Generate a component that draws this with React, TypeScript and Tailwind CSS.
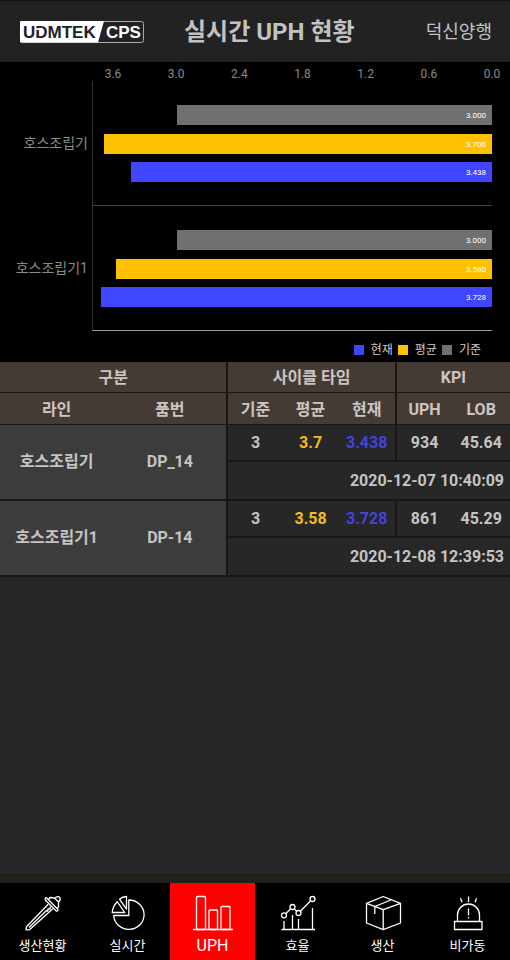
import type { ReactNode } from "react";

const font = "font-[Roboto,'Noto_Sans_CJK_KR',sans-serif]";

const AXIS_MAX = 3.8;
const ticks = ["3.6", "3.0", "2.4", "1.8", "1.2", "0.6", "0.0"];

type Line = {
  name: string;
  part: string;
  base: number;
  average: number;
  current: number;
  uph: number;
  lob: number;
  time: string;
};

const lines: Line[] = [
  { name: "호스조립기", part: "DP_14", base: 3, average: 3.7, current: 3.438, uph: 934, lob: 45.64, time: "2020-12-07 10:40:09" },
  { name: "호스조립기1", part: "DP-14", base: 3, average: 3.58, current: 3.728, uph: 861, lob: 45.29, time: "2020-12-08 12:39:53" },
];

function Logo() {
  return (
    <svg viewBox="0 0 124 22" className="h-[22px] w-[124px] shrink-0" role="img" aria-label="UDMTEK CPS">
      <rect x="0.5" y="0.5" width="123" height="21" rx="2" fill="#222" stroke="#aaa" />
      <path d="M1 0H84L78 21.5H1Q0 21.5 0 20.5V1Q0 0 1 0Z" fill="#fff" />
      <text x="3" y="17" fontSize="17" fontWeight="700" fill="#222" fontFamily="Liberation Sans, sans-serif">UDMTEK</text>
      <text x="86" y="17" fontSize="17" fontWeight="700" fill="#fff" fontFamily="Liberation Sans, sans-serif">CPS</text>
      <path d="M15.500 7.200H20.500V9H15.500Z" fill="#fff" />
    </svg>
  );
}

function Bar({ value, tone }: { value: number; tone: string }) {
  return (
    <div
      className={`flex h-5 items-center justify-end pt-0.5 pr-[6px] text-[8px] leading-none text-white ${tone}`}
      style={{ width: `${(value / AXIS_MAX) * 100}%` }}
    >
      {value.toFixed(3)}
    </div>
  );
}

function Chart() {
  return (
    <section className="bg-black pr-[18px] pb-[4px]">
      <div className="ml-[92px]">
        <div className="flex h-[19px] items-center justify-between pt-[4px] pl-[5.26%] text-xs leading-4 text-[#8a8a8a]">
          {ticks.map((tick) => (
            <span key={tick} className="flex w-0 justify-center">{tick}</span>
          ))}
        </div>
      </div>
      {lines.map((line, i) => (
        <div key={line.name} className="flex h-[125px]">
          <div className="flex w-[92px] shrink-0 items-center justify-end pr-1 pb-0.5 text-sm text-[#8a8a8a]">{line.name}</div>
          <div className={`flex flex-1 flex-col items-end justify-between border-b border-l border-l-[#333] pt-6 pb-[23px] ${i === lines.length - 1 ? "border-b-[#999]" : "border-b-[#444]"}`}>
            <Bar value={line.base} tone="bg-[#707070]" />
            <Bar value={line.average} tone="bg-[#ffc000]" />
            <Bar value={line.current} tone="bg-[#4045ff]" />
          </div>
        </div>
      ))}
      <ul className="flex h-[27px] items-end justify-end gap-[5px] pr-[11px] text-xs leading-4 text-[#ccc]">
        <li className="flex items-center gap-[7px]"><i className="size-[10px] bg-[#4045ff]" />현재</li>
        <li className="flex items-center gap-[7px]"><i className="size-[10px] bg-[#ffc000]" />평균</li>
        <li className="flex items-center gap-[7px]"><i className="size-[10px] bg-[#707070]" />기준</li>
      </ul>
    </section>
  );
}

function UphTable() {
  const edge = "border-l-2";
  return (
    <table className="w-full table-fixed border-separate border-spacing-0 text-center text-base leading-5 font-bold text-[#c4c4c4]">
      <colgroup>
        <col className="w-[22.2%]" />
        <col className="w-[22.2%]" />
        <col className="w-[11%]" />
        <col className="w-[11%]" />
        <col className="w-[11%]" />
        <col />
        <col />
      </colgroup>
      <thead className="bg-[#453b35] text-[#cdc5c1]">
        <tr className="h-[31px] *:border-b *:border-[#171717] *:p-0 *:pt-0.5">
          <th colSpan={2}>구분</th>
          <th colSpan={3} className={edge}>사이클 타임</th>
          <th colSpan={2} className={edge}>KPI</th>
        </tr>
        <tr className="h-8 *:border-b *:border-[#171717] *:p-0 *:pt-0.5">
          <th>라인</th>
          <th>품번</th>
          <th className={edge}>기준</th>
          <th>평균</th>
          <th>현재</th>
          <th className={edge}>UPH</th>
          <th>LOB</th>
        </tr>
      </thead>
      {lines.map((line) => (
        <tbody key={line.name}>
          <tr className="h-[37px] *:border-[#171717] *:p-0">
            <td rowSpan={2} className="border-b-2 bg-[#3c3c3c]">{line.name}</td>
            <td rowSpan={2} className="border-b-2 bg-[#3c3c3c]">{line.part}</td>
            <td className="border-b-2 border-l-2">{line.base}</td>
            <td className="border-b-2 text-[#f5b921]">{line.average}</td>
            <td className="border-b-2 text-[#4444dc]">{line.current}</td>
            <td className="border-b-2 border-l-2">{line.uph}</td>
            <td className="border-b-2">{line.lob}</td>
          </tr>
          <tr className="h-[39px]">
            <td colSpan={5} className="border-b-2 border-l-2 border-[#171717] p-0 pr-[6px] text-right">{line.time}</td>
          </tr>
        </tbody>
      ))}
    </table>
  );
}

const tabs: { label: string; active?: boolean; icon: ReactNode }[] = [
  {
    label: "생산현황",
    icon: (
      <>
        <path d="M25.200 11.300 3.500 33.800 3 36.800 6.500 36.700 29.800 15.700" />
        <path d="M6 34.500 23.500 17.500 24.800 18.200 25 15.800 27 16 27.500 13.500" />
        <path d="M23.500 4.800 35 16.500Q35.500 18.500 33.200 18L22.300 7Q21.700 4.500 23.500 4.800Z" />
        <path d="M25.500 6.500 27 4.500 31.500 5 35.500 9 35.500 14 34 15.500" />
        <path d="M32.200 5.700A2.500 2.500 0 1 1 35.200 8.600" />
      </>
    ),
  },
  {
    label: "실시간",
    icon: (
      <>
        <path d="M20.800 7V22.500H5.700A15.200 14.700 0 1 0 20.800 7Z" />
        <path d="M18.500 3.500V16L11.500 6.200Q14.500 3.800 18.500 3.500Z" />
        <path d="M9.300 8.800 16.800 19.500H4.200Q4.800 13 9.300 8.800Z" />
      </>
    ),
  },
  {
    label: "UPH",
    active: true,
    icon: (
      <>
        <path d="M0 36.500H40" />
        <rect x="3.500" y="3.500" width="9" height="33" rx="1" />
        <rect x="16" y="17" width="8.500" height="19.500" rx="1" />
        <rect x="28" y="13.500" width="9" height="23" rx="1" />
      </>
    ),
  },
  {
    label: "효율",
    icon: (
      <>
        <path d="M3.500 36.500H37M6 36V28M14.500 36V22M20.500 36V26M34.500 36V15M8 20.500 12.700 15.800M16 16 19 18.200M22.300 18.200 32.700 7.800" />
        <circle cx="6" cy="22.300" r="2.500" />
        <circle cx="14.500" cy="14" r="2.500" />
        <circle cx="20.500" cy="20" r="2.500" />
        <circle cx="34.500" cy="6" r="2.500" />
      </>
    ),
  },
  {
    label: "생산",
    icon: <path d="M20.200 3.500 37.500 10.300V30L20.200 36.700 3.500 30V10.300ZM3.500 10.300 20.200 16.700 37.500 10.300M20.200 16.700V36.700M29 6.500 11.800 13.500V21" />,
  },
  {
    label: "비가동",
    icon: (
      <>
        <rect x="6.500" y="28.500" width="27.500" height="8" />
        <path d="M9.500 28.500V22A11 11 0 0 1 31.500 22V28.500" />
        <path d="M20.500 15.500V22.500M20.500 24V25.500M20.500 3.500V9M12.500 5.300 14 9.300M28.500 5.300 27 9.300" />
      </>
    ),
  },
];

export default function App() {
  return (
    <div className={`flex min-h-screen flex-col bg-[#272727] ${font}`}>
      <header className="flex h-[62px] items-center border-t border-[#111] bg-[#222] pr-[18px] pl-5 text-[#c2c2c2]">
        <Logo />
        <h1 className="ml-10 text-2xl leading-8 font-bold">실시간 UPH 현황</h1>
        <span className="ml-auto text-lg leading-6">덕신양행</span>
      </header>
      <Chart />
      <main className="flex-1">
        <UphTable />
      </main>
      <nav className="grid h-[87px] grid-cols-6 border-t-[10px] border-[#231f1a] bg-black text-white">
        {tabs.map((tab) => (
          <button
            key={tab.label}
            type="button"
            className={`flex flex-col items-center pt-[10px] ${tab.active ? "bg-[#ff0000] text-base" : "text-[13px]"}`}
          >
            <svg viewBox="0 0 40 40" className="size-10" fill="none" stroke="currentColor" strokeWidth="1.3" strokeLinejoin="round">
              {tab.icon}
            </svg>
            <span className="leading-[26px]">{tab.label}</span>
          </button>
        ))}
      </nav>
    </div>
  );
}
